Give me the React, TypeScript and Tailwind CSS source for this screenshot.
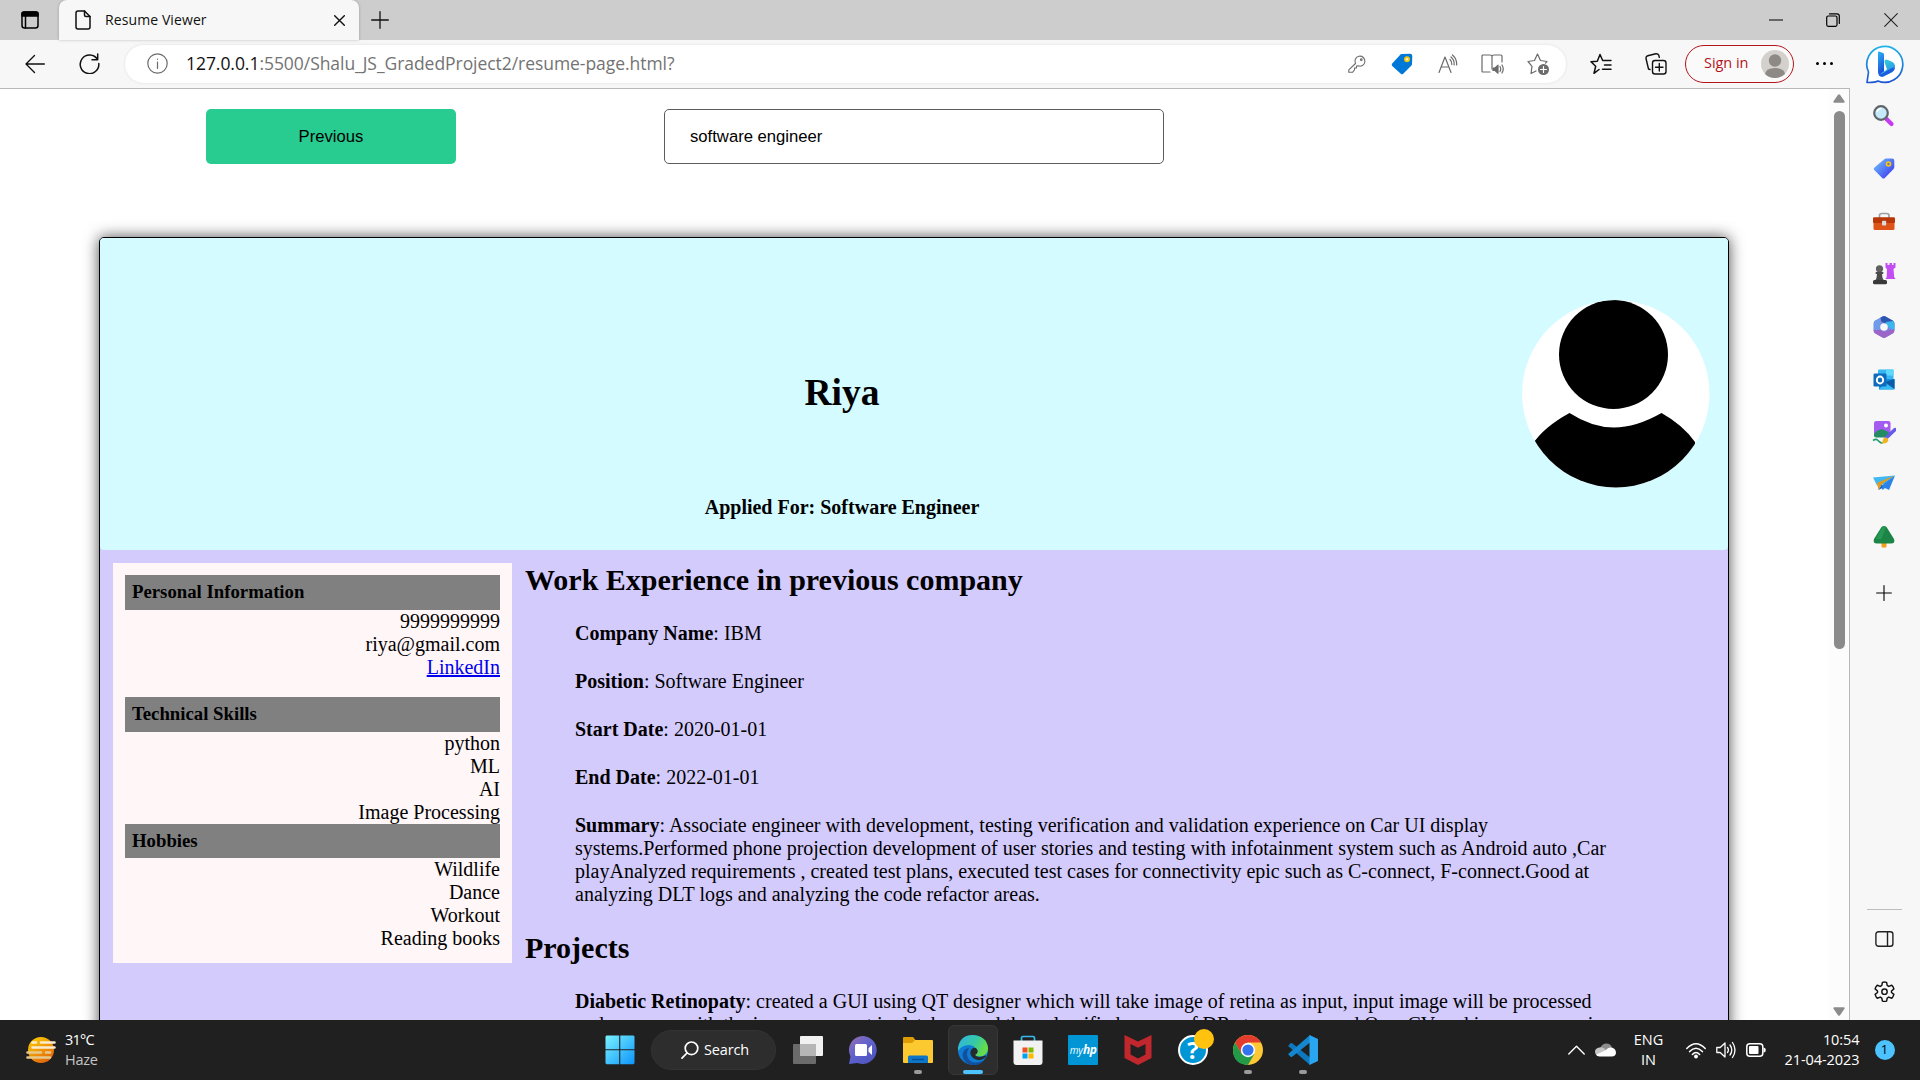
import type { ReactNode } from "react";

const ui = "font-['Open_Sans','Noto_Sans',sans-serif]";

function Stroke({ className, box, children, w = 1.3 }: { className: string; box: string; children: ReactNode; w?: number }) {
  return (
    <svg className={`shrink-0 ${className}`} viewBox={box} fill="none" stroke="currentColor" strokeWidth={w} strokeLinecap="round" strokeLinejoin="round">
      {children}
    </svg>
  );
}

/* ---------- Browser chrome ---------- */

function TabStrip() {
  return (
    <div className="flex h-10 bg-[#cdcdcd]">
      <div className="flex w-[59px] items-center rounded-br-md bg-[#cdcdcd]">
        <Stroke className="ml-[21px] h-[18px] w-[18px] text-black" box="0 0 18 18" w={1.5}>
          <rect x="1" y="1" width="16" height="16" rx="2.5" />
          <path d="M1 2.5Q1 1 3 1h12q2 0 2 1.500V5H1z" fill="currentColor" />
          <path d="M4.500 5v12" />
        </Stroke>
      </div>
      <div className="flex w-[300px] items-center rounded-t-lg bg-[#f7f7f7] shadow-[0_0_3px_rgba(0,0,0,0.25)]">
        <Stroke className="ml-4 h-5 w-4 text-[#111]" box="0 0 16 20" w={1.5}>
          <path d="M3 1h6.500L15 6.500V17q0 2-2 2H3q-2 0-2-2V3q0-2 2-2z" />
          <path d="M9.500 1v4q0 1.500 1.500 1.500h4" />
        </Stroke>
        <span className="ml-[14px] w-[229px] pb-0.5 text-[14px] tracking-[0.1px] text-[#111]">Resume Viewer</span>
        <Stroke className="h-[11px] w-[11px] text-[#111]" box="0 0 11 11" w={1.4}>
          <path d="M.7.7l9.600 9.600M10.300.7L.7 10.300" />
        </Stroke>
      </div>
      <div className="flex grow items-center pb-px">
        <Stroke className="ml-[12px] h-[18px] w-[18px] text-[#111]" box="0 0 18 18" w={1.3}>
          <path d="M9 .7v16.600M.7 9h16.600" />
        </Stroke>
        <Stroke className="ml-auto h-[14px] w-[14px] text-black" box="0 0 14 14" w={1.2}>
          <path d="M.5 7h13" />
        </Stroke>
        <Stroke className="ml-[43px] h-[14px] w-[14px] text-black" box="0 0 14 14" w={1.2}>
          <rect x=".7" y="3" width="10.300" height="10.300" rx="1.500" />
          <path d="M3.500.8H11q2.300 0 2.300 2.300v7.400" />
        </Stroke>
        <Stroke className="ml-[44px] mr-[22px] h-[14px] w-[14px] text-[#222]" box="0 0 14 14" w={1.1}>
          <path d="M.7.7l12.600 12.600M13.300.7L.7 13.300" />
        </Stroke>
      </div>
    </div>
  );
}

function Toolbar() {
  return (
    <div className="flex h-12 items-center bg-[#f7f7f7] pb-px">
      <Stroke className="ml-[25px] h-5 w-5 text-[#111]" box="0 0 20 20" w={1.4}>
        <path d="M19.300 10H1M9.500 1.500L1 10l8.500 8.500" />
      </Stroke>
      <Stroke className="ml-[34px] h-[21px] w-[21px] text-[#111]" box="0 0 21 21" w={1.5}>
        <path d="M18.500 6.500A9.300 9.300 0 1 0 19.800 10.500M18.700 1v5.700H13" />
      </Stroke>
      <div className="ml-[25px] flex h-[38px] w-[1441px] items-center rounded-full bg-white text-[#6b6b6b] shadow-[0_0_3px_rgba(0,0,0,0.1)]">
        <Stroke className="ml-[22px] h-[21px] w-[21px]" box="0 0 21 21" w={1.2}>
          <circle cx="10.500" cy="10.500" r="9.700" />
          <path d="M10.500 9v6.500M10.500 6v.3" />
        </Stroke>
        <span className="ml-[18px] w-[1162px] whitespace-nowrap pb-px text-[17.500px] tracking-[-0.050px] text-[#737373]">
          <span className="text-[#111]">127.0.0.1</span>:5500/Shalu_JS_GradedProject2/resume-page.html?
        </span>
        <Stroke className="h-[18px] w-[18px]" box="0 0 18 18" w={1.1}>
          <path d="M7.500 8.500A5 5 0 1 1 10 10.800L8.500 11v2H6.500v2L4.500 17.300H.8v-2.500z" />
          <circle cx="13.300" cy="4.700" r=".8" />
        </Stroke>
        <svg className="ml-[25px] h-[22px] w-[22px] shrink-0" viewBox="0 0 22 22">
          <path d="M10.500 1L19 .8q2.300 0 2.300 2.300L21 11q0 1-.8 1.800l-8 8q-1.200 1-2.400 0L1.200 13q-1-1.200 0-2.400L9 2q.6-1 1.500-1z" fill="#0078d7" />
          <circle cx="16" cy="6.200" r="3" fill="#f4c20d" />
          <circle cx="16" cy="6.200" r="1.200" fill="#fff2b8" />
        </svg>
        <Stroke className="ml-[25px] h-5 w-5" box="0 0 20 20" w={1.2}>
          <path d="M1 18.500L7 3l6 15.500M3.200 13h7.600M12 5.500q2 2 1.800 5M13 3q3.500 3 3.200 8M14.500 1q4.500 4 4.200 10" />
        </Stroke>
        <Stroke className="ml-[23px] h-[22px] w-[23px]" box="0 0 23 22" w={1.2}>
          <path d="M9 19H2q-1 0-1-1V3q0-1 1-1h7q2 0 2 1.500Q11 2 13 2h7q1 0 1 1v6M11 3.500V16" />
          <path d="M12 15h2l3-2.800v8L14 17.500h-2z" fill="currentColor" />
          <path d="M19 13.500q1.500 2.500 0 5M21 12q2.500 4 0 8" />
        </Stroke>
        <Stroke className="ml-[23px] h-[24px] w-[23px]" box="0 0 23 24" w={1.2}>
          <path d="M9 19l-5 2.500L5 14.300 1 9.500l6.500-1L10.500 2l3 6.500 6.500 1-1.500 1.700" />
          <circle cx="16.500" cy="17.500" r="5.500" fill="#6b6b6b" stroke="none" />
          <path d="M16.500 14.500v6M13.500 17.500h6" stroke="#fff" />
        </Stroke>
      </div>
      <Stroke className="ml-[24px] h-[22px] w-[22px] text-[#111]" box="0 0 22 22" w={1.5}>
        <path d="M9 16.500l-5 3.800 1.700-7L1 8.700l6.300-.5L10 1.500l2.700 6H21M14.500 12H21M12.500 16.300H21" />
      </Stroke>
      <Stroke className="ml-[33px] h-[22px] w-[22px] text-[#111]" box="0 0 22 22" w={1.4}>
        <rect x="7.500" y="7.500" width="13.500" height="13.500" rx="2.500" />
        <path d="M14.300 10.500v7.500M10.500 14.300H18M5 16.500l-1.500-.5L1 5.500Q.8 3.300 2.800 2.800l8-2q2.200-.3 3 1.500l.5 2" />
      </Stroke>
      <div className="ml-[18px] flex h-[38px] w-[109px] shrink-0 items-center rounded-full border-[1.500px] border-[#b3151b] bg-[#fafafa]">
        <span className="ml-[18px] w-[57px] whitespace-nowrap pb-px text-[14.500px] tracking-[-0.050px] text-[#b3151b]">Sign in</span>
        <svg className="h-7 w-7" viewBox="0 0 28 28">
          <circle cx="14" cy="14" r="14" fill="#d4d1cd" />
          <circle cx="14" cy="10.500" r="6.200" fill="#8d8984" />
          <path d="M4 24q1-6 10-6t10 6q-4 4-10 4T4 24z" fill="#8d8984" />
        </svg>
      </div>
      <div className="ml-[22px] flex gap-1">
        <i className="h-[3px] w-[3px] rounded-full bg-black" />
        <i className="h-[3px] w-[3px] rounded-full bg-black" />
        <i className="h-[3px] w-[3px] rounded-full bg-black" />
      </div>
      <svg className="ml-auto mr-[15px] h-10 w-10 shrink-0" viewBox="0 0 40 40">
        <defs>
          <linearGradient id="bingRing" x1="0" y1="0" x2="0" y2="1">
            <stop offset="0" stopColor="#1fb4e8" />
            <stop offset="1" stopColor="#1b55d0" />
          </linearGradient>
          <linearGradient id="bingB" x1="0" y1="0" x2="0.3" y2="1">
            <stop offset="0" stopColor="#2bb5f5" />
            <stop offset="1" stopColor="#1a4fd8" />
          </linearGradient>
          <linearGradient id="bingC" x1="0" y1="0" x2="0.6" y2="1">
            <stop offset="0" stopColor="#35e0d0" />
            <stop offset="1" stopColor="#2a8af0" />
          </linearGradient>
        </defs>
        <path d="M2 38.500l1.500-10.500A18 18 0 1 1 13 37q-3 1.700-11 1.500z" fill="#fff" stroke="url(#bingRing)" strokeWidth="1.700" strokeLinejoin="round" />
        <path d="M14 7.500l4 1.500q1 .4 1 1.500v17L14.500 31Q13 30 13 28V8.500q0-1 1-1z" fill="url(#bingB)" />
        <path d="M21.500 15.500l5 2q3.500 1.500 3.500 5t-2.500 5.500l-9 4.500q-3 1-5-1.500l8.500-5.500-1-3-1.500-4.500q-.6-2 1.500-2.500z" fill="url(#bingC)" />
        <path d="M30 23.500q-.5 3-3 4.500l-9 4.500q-3 1-4.800-2.500 2 1 4.800-.8l8-4.700q2-.8 4-1z" fill="#1e5be0" />
      </svg>
    </div>
  );
}

/* ---------- Résumé page ---------- */

function SideBlock({ title, items, className = "", bar = "h-[35px]" }: { title: string; items: ReactNode[]; className?: string; bar?: string }) {
  return (
    <section className={className}>
      <h4 className={`flex items-center bg-[#808080] pl-[7px] text-[18.750px] font-bold leading-none ${bar}`}>{title}</h4>
      <ul className="text-right leading-[23px]">
        {items.map((item, i) => (
          <li key={i}>{item}</li>
        ))}
      </ul>
    </section>
  );
}

const facts = [
  ["Company Name", "IBM"],
  ["Position", "Software Engineer"],
  ["Start Date", "2020-01-01"],
  ["End Date", "2022-01-01"],
];

function Avatar() {
  return (
    <svg className="mr-[18px] mt-[62px] h-[188px] w-[188px] shrink-0" viewBox="0 0 188 188">
      <defs>
        <clipPath id="round">
          <circle cx="93.800" cy="93.800" r="93.700" />
        </clipPath>
      </defs>
      <g clipPath="url(#round)">
        <rect width="188" height="188" fill="#fff" />
        <circle cx="91.500" cy="54.500" r="54.500" />
        <path d="M47.500 113Q70 127.500 92 127.500T139.500 113Q161 125 173 142V188H10V145Q21 127.500 47.500 113z" />
      </g>
    </svg>
  );
}

function Resume() {
  return (
    <div className="ml-[99px] mt-[73px] h-[1000px] w-[1630px] rounded-[5px] border border-black bg-[#d4cbfd] font-['Liberation_Serif',serif] text-[20px] leading-[23px] text-black shadow-[0_0_15px_rgba(0,0,0,0.7)]">
      <header className="flex h-[312px] rounded-[4px] bg-[#d4fbff]">
        <div className="ml-[69px] flex w-[1346px] flex-col items-center">
          <h1 className="mt-[133px] text-[37.500px] font-bold leading-[43px]">Riya</h1>
          <h4 className="mt-[82px] text-[20px] font-bold leading-[23px]">Applied For: Software Engineer</h4>
        </div>
        <div className="grow" />
        <Avatar />
      </header>
      <div className="flex">
        <aside className="ml-[13px] mt-[13px] h-[400px] w-[399px] bg-[#fff6f7] px-3 pt-3">
          <SideBlock
            title="Personal Information"
            items={["9999999999", "riya@gmail.com", <a className="text-[#0000ee] underline">LinkedIn</a>]}
          />
          <SideBlock className="mt-[18px]" title="Technical Skills" items={["python", "ML", "AI", "Image Processing"]} />
          <SideBlock title="Hobbies" bar="h-[34px]" items={["Wildlife", "Dance", "Workout", "Reading books"]} />
        </aside>
        <article className="ml-[13px] w-[1100px]">
          <h2 className="mt-[13px] text-[30px] font-bold leading-[34px]">Work Experience in previous company</h2>
          <div className="ml-[50px] mt-[25px] flex flex-col gap-[25px]">
            {facts.map(([k, v]) => (
              <p key={k}>
                <b>{k}</b>: {v}
              </p>
            ))}
            <p className="whitespace-nowrap">
              <b>Summary</b>: Associate engineer with development, testing verification and validation experience on Car UI display
              <br />
              systems.Performed phone projection development of user stories and testing with infotainment system such as Android auto ,Car
              <br />
              playAnalyzed requirements , created test plans, executed test cases for connectivity epic such as C-connect, F-connect.Good at
              <br />
              analyzing DLT logs and analyzing the code refactor areas.
            </p>
          </div>
          <h2 className="mt-[25px] text-[30px] font-bold leading-[34px]">Projects</h2>
          <p className="ml-[50px] mt-[25px] whitespace-nowrap">
            <b>Diabetic Retinopaty</b>: created a GUI using QT designer which will take image of retina as input, input image will be processed
            <br />
            and compare with the images present in database and then classified as one of DR stages, we used OpenCV and image processing
          </p>
        </article>
      </div>
    </div>
  );
}

function Viewport() {
  return (
    <main className="flex w-[1850px] overflow-hidden border-r border-t border-[#b9b9b9] bg-white">
      <div className="h-[931px] w-[1829px] overflow-hidden">
        <div className="flex pt-5 font-['Liberation_Sans',sans-serif] text-[16.670px] text-black">
          <button className="ml-[206px] h-[55px] w-[250px] rounded-[5px] bg-[#28cb90]">Previous</button>
          <div className="ml-[208px] flex h-[55px] w-[500px] items-center rounded-[5px] border border-[#5c5c5c] pl-[25px]">software engineer</div>
        </div>
        <Resume />
      </div>
      <div className="flex w-5 flex-col items-center bg-[#fcfcfc]">
        <svg className="mt-[5px] h-[9px] w-[12px]" viewBox="0 0 12 9">
          <path d="M5 .8q1-1 2 0l4.500 6.500q.5 1.400-.8 1.400H1.300Q0 8.700.5 7.300z" fill="#8b8b8b" />
        </svg>
        <div className="mt-[8px] h-[538px] w-[11px] rounded-full bg-[#8b8b8b]" />
        <svg className="mb-[4px] mt-auto h-[9px] w-[12px]" viewBox="0 0 12 9">
          <path d="M5 8.200q1 1 2 0l4.500-6.500Q12 .3 10.700.3H1.300Q0 .3.500 1.700z" fill="#8b8b8b" />
        </svg>
      </div>
    </main>
  );
}

/* ---------- Edge sidebar ---------- */

function Cell({ children }: { children: ReactNode }) {
  return <div className="flex h-[52.650px] w-full shrink-0 items-center justify-center">{children}</div>;
}

function Art({ children, className = "h-6 w-6", box = "0 0 24 24" }: { children: ReactNode; className?: string; box?: string }) {
  return (
    <svg className={`shrink-0 ${className}`} viewBox={box}>
      {children}
    </svg>
  );
}

function EdgeSidebar() {
  return (
    <aside className="flex w-[70px] flex-col items-center bg-[#f7f7f7] pr-0.5 pt-0.5">
      <Cell>
        <Art>
          <path d="M14.500 15l5 5" stroke="#c63bf0" strokeWidth="4.200" strokeLinecap="round" />
          <circle cx="9" cy="9" r="6.800" fill="#c5e8fb" stroke="#5f6468" strokeWidth="2.200" />
          <path d="M5 8q1-3.500 4.500-3.500" stroke="#fff" strokeWidth="1.300" fill="none" />
        </Art>
      </Cell>
      <Cell>
        <Art>
          <defs>
            <linearGradient id="tag" x1="0" y1="0.3" x2="0.8" y2="1">
              <stop offset="0" stopColor="#6cb4f8" />
              <stop offset="1" stopColor="#3b3cf2" />
            </linearGradient>
          </defs>
          <path d="M12 2.500q1-1 2-1h6q2.300 0 2.300 2.300V10q0 1.300-1 2.200l-8.500 8.700q-1.300 1.200-2.600 0L2.200 13q-1-1.200 0-2.300z" fill="url(#tag)" />
          <circle cx="16.500" cy="7" r="2" fill="#7577a8" stroke="#f7c913" strokeWidth="1.600" />
        </Art>
      </Cell>
      <Cell>
        <Art>
          <path d="M7.500 8V5.500Q7.500 3.500 10 3.500h4.500q2.500 0 2.500 2V8" fill="none" stroke="#9a9fa3" strokeWidth="1.700" />
          <path d="M1.500 11h21v7.500q0 1.500-1.500 1.500H3q-1.500 0-1.500-1.500z" fill="#de5317" />
          <path d="M1 8.500q0-1.200 1.200-1.200h19.600Q23 7.300 23 8.500V12q0 1-1.200 1H2.200Q1 13 1 12z" fill="#b93607" />
          <rect x="10" y="10.800" width="4.200" height="4.700" rx="1" fill="#d8dcde" />
        </Art>
      </Cell>
      <Cell>
        <Art>
          <path d="M13.500 1h2v2h2V1h2.500v2h1.500V1h2v4.500L21.500 7l.7 8 1.300 2H13.500l1.200-2L15 7l-1.500-1.500z" fill="#c34df2" />
          <circle cx="7.500" cy="6.800" r="3.600" fill="#606060" />
          <path d="M3.500 11q0-1 1-1h6q1 0 1 1t-1 1H10q0 4 2 6.500H3.200Q5 16 5 12h-.5q-1 0-1-1z" fill="#4b4b4b" />
          <rect x="1" y="18" width="14" height="4.200" rx="1.500" fill="#383838" />
        </Art>
      </Cell>
      <Cell>
        <Art>
          <path d="M10.500 1.500q1.500-.9 3 0l7.500 4.300q1.300.8 1.300 2.400v7.600q0 1.600-1.300 2.400l-7.500 4.300q-1.500.9-3 0L3 18.200q-1.300-.8-1.300-2.400V8.200q0-1.600 1.300-2.400z" fill="#7f7fe0" />
          <path d="M10.500 1.500q1.500-.9 3 0l7.500 4.300q1.300.8 1.300 2.400V14L17 10.500 9.500 6.500 8 3z" fill="#2c57b0" />
          <path d="M13.500 7l8-1q.8.900.8 2.200V16l-6.300-4z" fill="#3cb7ed" />
          <path d="M1.700 15l6-.5 4 2.500 10.600-3v1.800q0 1.600-1.300 2.400l-7.500 4.300q-1.500.9-3 0L3 18.200q-1.300-.8-1.300-2.400z" fill="#9c66c9" />
          <path d="M2 7.500Q2.300 6.200 3 5.800l5.500-3.100L9 8l-1.500 7H1.700V8.200z" fill="#6f9be9" />
          <circle cx="12" cy="12" r="3.800" fill="#f7f7f7" />
        </Art>
      </Cell>
      <Cell>
        <Art>
          <rect x="6" y="1.500" width="15.500" height="12" rx="1" fill="#35b8f1" />
          <path d="M14 1.500h7.500v6H14z" fill="#5dd8fa" />
          <path d="M7 11h15.500v9.500q0 1-1 1H7z" fill="#1490df" />
          <path d="M13 14l9.500-3v10z" fill="#0a5aa8" />
          <path d="M7 21.500l15.500-.2-9-6z" fill="#35bdf3" />
          <rect x="1.500" y="5.500" width="13" height="13" rx="1.300" fill="#0f6cbd" />
          <ellipse cx="8" cy="12" rx="3.200" ry="3.500" fill="none" stroke="#fff" strokeWidth="1.900" />
        </Art>
      </Cell>
      <Cell>
        <Art>
          <rect x="2" y="1" width="16.500" height="16" rx="2.200" fill="#a45bf0" />
          <circle cx="14" cy="5.500" r="2" fill="#fff" />
          <path d="M2 14q5-5.500 9-4.500t7.500 4.500V16q-1 1.500-2.500 1.500H4Q2 17 2 15.500z" fill="#248c62" />
          <path d="M1 20.500q3-2 4.500-.5t3 2.500 3-.5" fill="none" stroke="#1f9c70" strokeWidth="1.600" />
          <path d="M14.500 17.500l8.500-8" stroke="#655bea" strokeWidth="3.500" strokeLinecap="round" />
          <path d="M9 23q2-1.200 2-3.500 1.500-3 4.500-1.500 2 3-1 4.700Q12 24 9 23z" fill="#f0b323" />
        </Art>
      </Cell>
      <Cell>
        <Art>
          <path d="M1 4.500l22-2-9 8-9 2z" fill="#43b8f0" />
          <path d="M23 2.500l-6 14.500-4-2-2.500 2L9 13z" fill="#2b83ea" />
          <path d="M22.500 2.500L5 10l1.500 7L10 11z" fill="#e59a18" />
          <path d="M10 11l-3.500 6 4-2z" fill="#1968c8" />
        </Art>
      </Cell>
      <Cell>
        <Art>
          <rect x="9.500" y="16" width="5" height="6.500" rx="1" fill="#f0a01d" />
          <path d="M9.500 2Q12 0 14.500 2l7.500 12q1.500 4.500-3 4.500H5q-4.500 0-3-4.500z" fill="#1b8446" />
          <path d="M10 2.500q2-2 3.500.5l-4 11H4z" fill="#2da55c" opacity=".6" />
        </Art>
      </Cell>
      <div className="flex h-[59px] items-center">
        <Stroke className="h-[16px] w-[16px] text-black" box="0 0 16 16" w={1.1}>
          <path d="M8 .6v14.800M.6 8h14.800" />
        </Stroke>
      </div>
      <div className="mt-auto h-px w-[35px] bg-[#bdbdbd]" />
      <Stroke className="mt-[21px] h-4 w-[19px] text-[#222]" box="0 0 19 16" w={1.4}>
        <rect x=".9" y=".8" width="17" height="14.400" rx="2.500" />
        <path d="M12.500 1v14" />
      </Stroke>
      <Stroke className="mb-[17px] mt-[33px] h-[23px] w-[23px] text-[#111]" box="0 0 24 24" w={1.5}>
        <path d="M9.800 2.500Q12 1.800 14.200 2.500l.6 3.200 1.600 1 3.200-1.200q1.600 1.600 2.200 3.800L19.300 11.500v1.500l2.500 2q-.6 2.300-2.200 4l-3.200-1.200-1.600 1-.6 3.200q-2.200.6-4.400 0l-.6-3.200-1.600-1L4.400 19q-1.600-1.700-2.200-4l2.500-2v-1.500L2.200 9.300Q2.800 7 4.400 5.500l3.200 1.200 1.600-1z" />
        <circle cx="12" cy="12.200" r="2.800" />
      </Stroke>
    </aside>
  );
}

/* ---------- Windows taskbar ---------- */

function App55({ children, mark, active }: { children: ReactNode; mark?: boolean; active?: boolean }) {
  return (
    <div className="flex h-[60px] w-[55px] shrink-0 items-center justify-center">
      <div className={`relative flex h-[50px] w-[50px] items-center justify-center rounded-md ${active ? "border border-[#373737] bg-[#2d2d2d]" : ""}`}>
        {children}
        {mark && <i className="absolute bottom-[1px] h-1 w-2 rounded-full bg-[#9a9a9a]" />}
        {active && <i className="absolute bottom-0 h-1 w-5 rounded-full bg-[#4cc2ff]" />}
      </div>
    </div>
  );
}

const b30 = "0 0 30 30";
const s30 = "h-[30px] w-[30px]";

function Taskbar() {
  return (
    <footer className="flex h-[60px] items-center bg-[#202020] text-white">
      <Art className="ml-[26px] h-[30px] w-[30px]" box={b30}>
        <defs>
          <linearGradient id="sun" x1="0" y1="0" x2="0.6" y2="1">
            <stop offset="0" stopColor="#ffd400" />
            <stop offset="1" stopColor="#e2680c" />
          </linearGradient>
        </defs>
        <circle cx="15" cy="15" r="13" fill="url(#sun)" />
        <path d="M6.500 7.500H10M15 7.500h13.500M6.500 12.500h22" stroke="#fbeccd" strokeWidth="2.600" strokeLinecap="round" />
        <path d="M1.500 17.500H15M20 17.500h4M1.500 22.500H24" stroke="#e8c98c" strokeWidth="2.600" strokeLinecap="round" />
      </Art>
      <div className="ml-[9px] w-[540px] text-[14.500px] leading-5">
        <div className="tracking-[-0.8px]">31°C</div>
        <div className="tracking-[-0.300px] text-[#c5c5c5]">Haze</div>
      </div>
      <Art className="h-[30px] w-[30px]" box={b30}>
        <defs>
          <linearGradient id="win" gradientUnits="userSpaceOnUse" x1="0" y1="0" x2="30" y2="30">
            <stop offset="0" stopColor="#7df3ff" />
            <stop offset="1" stopColor="#0a93fb" />
          </linearGradient>
        </defs>
        <path d="M1.500.5h12.700v13.700H.5V1.500zM15.300.5h13.200l1 1v12.700H15.300zM.5 15.300h13.700v14H1.500l-1-1zM15.300 15.300h14.200v13l-1 1H15.300z" fill="url(#win)" />
      </Art>
      <div className="ml-[16px] flex h-10 w-[125px] items-center rounded-full border border-[#333] bg-[#2d2d2d]">
        <Stroke className="ml-[29px] h-[18px] w-[18px]" box="0 0 18 18" w={1.7}>
          <circle cx="10.500" cy="7.300" r="6.300" />
          <path d="M6 12L1 17.200" />
        </Stroke>
        <span className="ml-[5px] text-[14.500px] tracking-[-0.150px]">Search</span>
      </div>
      <div className="ml-[4.500px] flex">
        <App55>
          <Art className={s30} box={b30}>
            <rect x="7" y="1" width="23" height="20" rx="1" fill="#f1f1f1" />
            <rect x="0" y="9" width="23" height="20" rx="1" fill="#6b6b6b" />
            <path d="M7 9h16v12H7z" fill="#b6b6b6" />
          </Art>
        </App55>
        <App55>
          <Art className={s30} box={b30}>
            <defs>
              <linearGradient id="chat" x1="0" y1="0" x2="0.8" y2="1">
                <stop offset="0" stopColor="#9a6fb0" />
                <stop offset="0.5" stopColor="#6063cd" />
                <stop offset="1" stopColor="#4d53bd" />
              </linearGradient>
            </defs>
            <path d="M15 1a14 14 0 1 1-5.500 27L1 29l1.500-7.500A14 14 0 0 1 15 1z" fill="url(#chat)" />
            <rect x="7" y="9" width="12" height="12" rx="1.500" fill="#fff" />
            <path d="M20.500 13.200L24 10v10l-3.500-3.200z" fill="#fff" />
          </Art>
        </App55>
        <App55 mark>
          <Art className={s30} box={b30}>
            <path d="M0 3q0-1 1-1h9l3 3.500V10H0z" fill="#dd9b04" />
            <path d="M0 8h9l3-3h17q1 0 1 1v21q0 1-1 1H1q-1 0-1-1z" fill="#fdc931" />
            <path d="M5 28v-6q0-1.500 1.500-1.500h17q1.500 0 1.500 1.500v6z" fill="#0d76c9" />
            <path d="M9 24.500h12" stroke="#064e93" strokeWidth="1.300" />
          </Art>
        </App55>
        <App55 active>
          <Art className={s30} box={b30}>
            <defs>
              <linearGradient id="eg" x1="0" y1="0" x2="1" y2="0.4">
                <stop offset="0" stopColor="#31b4ea" />
                <stop offset="0.600" stopColor="#36c8a5" />
                <stop offset="1" stopColor="#66dc4a" />
              </linearGradient>
            </defs>
            <circle cx="15" cy="15" r="15" fill="#0d7cd2" />
            <path d="M0 13Q2 0 15 0q13.500 1 15 12.500.5 8-8 9-5 0-5.500-2.500 2-1.500 1.500-4Q17 10.500 11 10 3.500 10 0 16z" fill="url(#eg)" />
            <path d="M11 13q-4 6 0 11.500t15 1Q21.500 31 14 30 5.500 28.500 4.500 20q.5-6 6.500-7z" fill="#12509f" />
            <path d="M18 13q4 4-1 7 3 3.500 10.500.5 1-.5 0 2-6.500 5-12.500.5-4-4-2-8 2-3 5-2z" fill="#252a2e" />
          </Art>
        </App55>
        <App55>
          <Art className={s30} box={b30}>
            <path d="M8.500 7V3q0-1.500 1.500-1.500h10q1.500 0 1.500 1.500v4" fill="none" stroke="#35b9ee" strokeWidth="1.700" />
            <path d="M.5 5.500h29V27q0 3-3 3h-23q-3 0-3-3z" fill="#f2f2f2" />
            <path d="M9.500 12.500h5v5h-5z" fill="#f04e23" />
            <path d="M15.500 12.500h5v5h-5z" fill="#7fb900" />
            <path d="M9.500 18.500h5v5h-5z" fill="#00a3ee" />
            <path d="M15.500 18.500h5v5h-5z" fill="#ffb800" />
          </Art>
        </App55>
        <App55>
          <div className="flex h-[30px] w-[30px] items-center justify-center rounded-[1px] bg-[#0096d6] text-[10px] italic leading-none text-white">
            <span>my</span>
            <b className="text-[12px] tracking-[-0.5px]">hp</b>
          </div>
        </App55>
        <App55>
          <Art className={s30} box={b30}>
            <path d="M1.500 0L15 6.500 28.500 0v23L15 30 1.500 23zM7.500 9v10.500l7.500 4 7.500-4V9L15 12.800z" fill="#c1272d" fillRule="evenodd" />
          </Art>
        </App55>
        <App55>
          <div className="relative flex h-[30px] w-[30px] items-center justify-center rounded-full border-2 border-white bg-[#0096d6] text-[24px] font-bold leading-none">
            ?
            <i className="absolute -right-[8px] -top-[8px] h-5 w-5 rounded-full bg-[#ffc20e]" />
          </div>
        </App55>
        <App55 mark>
          <Art className={s30} box={b30}>
            <circle cx="15" cy="15" r="15" fill="#fcc934" />
            <path d="M2 7.500Q6.500 0 15 0t13 7.500H15L8.500 19z" fill="#e33b2e" />
            <path d="M2 7.500l6.500 11.200Q12 22 21.500 18.700L15 30Q0 29 0 15q0-4 2-7.500z" fill="#239a48" />
            <circle cx="15" cy="15" r="7.200" fill="#fff" />
            <circle cx="15" cy="15" r="5.600" fill="#3273f0" />
          </Art>
        </App55>
        <App55 mark>
          <Art className={s30} box={b30}>
            <path d="M.5 10.500l2-2.200q1-.6 2 .1L22 22.500V30L.7 11.500q-.5-.5-.2-1z" fill="#0e78bf" />
            <path d="M.5 19.500l2 2.200q1 .6 2-.1L22 7.500V0L.7 18.500q-.5.500-.2 1z" fill="#1487d0" />
            <path d="M21.500 0L30 4v22l-8.500 4z" fill="#2aa5f2" />
          </Art>
        </App55>
      </div>
      <Stroke className="ml-[237px] h-[10px] w-[17px]" box="0 0 17 10" w={1.4}>
        <path d="M.8 9l7.700-7.700L16.200 9" />
      </Stroke>
      <Art className="ml-[10px] h-[14px] w-[21px]" box="0 0 21 14">
        <path d="M5 6q1.500-5.500 6.500-5.500 4 0 5.500 4l-8 5z" fill="#8d8d8d" />
        <path d="M4.500 4.500Q8 3.500 11 7l-7 6q-4-1-4-4.300 0-3.500 4.500-4.200z" fill="#c6c6c6" />
        <path d="M15 4.500q5.500 0 6 5 0 4-4.500 4H4.500q-2.500 0-3.500-1.800L11 7q1.500-2.500 4-2.500z" fill="#fff" />
      </Art>
      <div className="ml-[13px] w-10 text-center text-[14.500px] leading-5">
        ENG
        <br />
        IN
      </div>
      <Stroke className="ml-[17px] h-[17px] w-[20px]" box="0 0 20 17" w={1.5}>
        <path d="M.8 6.500q9.200-9.500 18.400 0M3.600 9.600q6.400-6.600 12.800 0M6.400 12.500q3.600-3.800 7.200 0" />
        <circle cx="10" cy="14.500" r="1.200" fill="currentColor" />
      </Stroke>
      <Stroke className="ml-[10px] h-[18px] w-[20px]" box="0 0 20 18" w={1.3}>
        <path d="M.8 6.500h3.400L9 2v14l-4.800-4.500H.8zM11.500 6.500q1.800 2.500 0 5M14 4q3.600 5 0 10M16.500 1.500q5 7.500 0 15" />
      </Stroke>
      <Art className="ml-[10px] h-[14px] w-[20px]" box="0 0 20 14">
        <rect x=".8" y=".8" width="16" height="12.400" rx="3" fill="none" stroke="#fff" strokeWidth="1.500" />
        <rect x="3" y="3" width="9.500" height="8" rx="1" fill="#fff" />
        <path d="M17.500 4.500q2.300 0 2.300 2.500t-2.300 2.500z" fill="#fff" />
      </Art>
      <div className="ml-[14px] w-20 whitespace-nowrap text-right text-[14.500px] leading-5 tracking-[-0.070px]">
        10:54
        <br />
        21-04-2023
      </div>
      <div className="ml-[15px] flex h-5 w-5 items-center justify-center rounded-full bg-[#4cc2ff] text-[13px] text-black">1</div>
    </footer>
  );
}

export default function App() {
  return (
    <div className={`h-[1080px] w-[1920px] overflow-hidden bg-[#f7f7f7] ${ui}`}>
      <TabStrip />
      <Toolbar />
      <div className="flex h-[932px]">
        <Viewport />
        <EdgeSidebar />
      </div>
      <Taskbar />
    </div>
  );
}
